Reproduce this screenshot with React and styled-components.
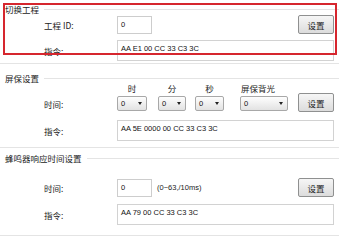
import React from 'react'
import styled, { createGlobalStyle } from 'styled-components'

const GlobalStyle = createGlobalStyle`
  html, body { margin: 0; padding: 0; background: #fff; }
  body { font-family: "Noto Sans CJK SC", "Liberation Sans", sans-serif; color: #1e1e1e; }
`

function App() {
    return (
        <Page>
            <GlobalStyle />
            <Group $pb={2} $mb={9}>
                <GroupTitle>切换工程</GroupTitle>
                <Row $mt={1}>
                    <Label>工程 ID:</Label>
                    <SmallInput>0</SmallInput>
                    <Button>设置</Button>
                </Row>
                <Row $mt={6}>
                    <Label>指令:</Label>
                    <CmdInput>AA E1 00 CC 33 C3 3C</CmdInput>
                </Row>
            </Group>

            <Group $pb={6} $mb={5}>
                <GroupTitle>屏保设置</GroupTitle>
                <Row $mt={0} $align="flex-end">
                    <Label $h={15}>时间:</Label>
                    <SelectCol $ml={0}>
                        <ColHead>时</ColHead>
                        <Select $w={30}>0</Select>
                    </SelectCol>
                    <SelectCol $ml={11}>
                        <ColHead>分</ColHead>
                        <Select $w={28}>0</Select>
                    </SelectCol>
                    <SelectCol $ml={9}>
                        <ColHead>秒</ColHead>
                        <Select $w={29}>0</Select>
                    </SelectCol>
                    <SelectCol $ml={16} $align="flex-start">
                        <ColHead $pl={1}>屏保背光</ColHead>
                        <Select $w={48}>0</Select>
                    </SelectCol>
                    <Button $mb={-1}>设置</Button>
                </Row>
                <Row $mt={9}>
                    <Label>指令:</Label>
                    <CmdInput>AA 5E 0000 00 CC 33 C3 3C</CmdInput>
                </Row>
            </Group>

            <Group $pb={10} $mb={0}>
                <GroupTitle>蜂鸣器响应时间设置</GroupTitle>
                <Row $mt={15}>
                    <Label>时间:</Label>
                    <SmallInput>0</SmallInput>
                    <Hint>(0~63,/10ms)</Hint>
                    <Button>设置</Button>
                </Row>
                <Row $mt={7}>
                    <Label>指令:</Label>
                    <CmdInput>AA 79 00 CC 33 C3 3C</CmdInput>
                </Row>
            </Group>

            <Highlight />
        </Page>
    )
}

export default App

const Page = styled.div`
    position: relative;
    width: 339px;
    height: 243px;
    overflow: hidden;
    padding-top: 4px;
    box-sizing: border-box;
`
const Group = styled.section`
    border-bottom: 1px solid #e4e4e4;
    padding-bottom: ${p => p.$pb}px;
    margin-bottom: ${p => p.$mb}px;
`
const GroupTitle = styled.div`
    display: flex;
    align-items: center;
    height: 10px;
    line-height: 10px;
    padding-left: 5px;
    font-size: 8.5px;
    color: #222;
    white-space: nowrap;
    &::after {
        content: '';
        flex: 1;
        border-top: 1px solid #e4e4e4;
        margin-left: 5px;
    }
`
const Row = styled.div`
    display: flex;
    align-items: ${p => p.$align || 'center'};
    margin-top: ${p => p.$mt}px;
    padding-left: 44px;
    padding-right: 5px;
`
const Label = styled.div`
    width: 73px;
    flex: none;
    height: ${p => (p.$h ? p.$h + 'px' : 'auto')};
    display: flex;
    align-items: center;
    font-size: 8.5px;
    color: #222;
    white-space: nowrap;
`
const SmallInput = styled.div`
    width: 35px;
    height: 18px;
    box-sizing: border-box;
    border: 1px solid #cdcdcd;
    background: #fff;
    display: flex;
    align-items: center;
    padding-left: 3px;
    font-family: "Liberation Sans", sans-serif;
    font-size: 7.5px;
    color: #111;
`
const CmdInput = styled.div`
    width: 219px;
    height: 21px;
    box-sizing: border-box;
    border: 1px solid #d2d2d2;
    background: #fff;
    padding: 3px 0 0 3px;
    line-height: 9px;
    font-family: "Liberation Sans", sans-serif;
    font-size: 7.5px;
    color: #111;
    white-space: nowrap;
`
const Hint = styled.div`
    margin-left: 5px;
    font-family: "Liberation Sans", sans-serif;
    font-size: 7.5px;
    color: #222;
    white-space: nowrap;
`
const Button = styled.div`
    margin-left: auto;
    margin-bottom: ${p => p.$mb || 0}px;
    width: 36px;
    height: 19px;
    box-sizing: border-box;
    border: 1px solid #8f9090;
    border-radius: 2px;
    background: linear-gradient(#f6f6f6, #dcdcdc);
    display: flex;
    align-items: center;
    justify-content: center;
    font-size: 8.5px;
    color: #222;
`
const SelectCol = styled.div`
    display: flex;
    flex-direction: column;
    align-items: ${p => p.$align || 'center'};
    margin-left: ${p => p.$ml}px;
`
const ColHead = styled.div`
    height: 11px;
    line-height: 11px;
    padding-left: ${p => p.$pl || 0}px;
    font-size: 8.5px;
    color: #222;
    white-space: nowrap;
`
const Select = styled.div`
    margin-top: 2px;
    width: ${p => p.$w}px;
    height: 15px;
    box-sizing: border-box;
    border: 1px solid #a8a8a8;
    border-radius: 2px;
    background: linear-gradient(#fefefe, #e2e2e2);
    display: flex;
    align-items: center;
    justify-content: space-between;
    padding: 0 4px 0 3px;
    font-family: "Liberation Sans", sans-serif;
    font-size: 7.5px;
    color: #111;
    &::after {
        content: '';
        border-left: 2.5px solid transparent;
        border-right: 2.5px solid transparent;
        border-top: 3px solid #222;
    }
`
const Highlight = styled.div`
    position: absolute;
    left: 3px;
    top: 3px;
    width: 334px;
    height: 52px;
    box-sizing: border-box;
    border: 2px solid #d6262e;
    pointer-events: none;
`
